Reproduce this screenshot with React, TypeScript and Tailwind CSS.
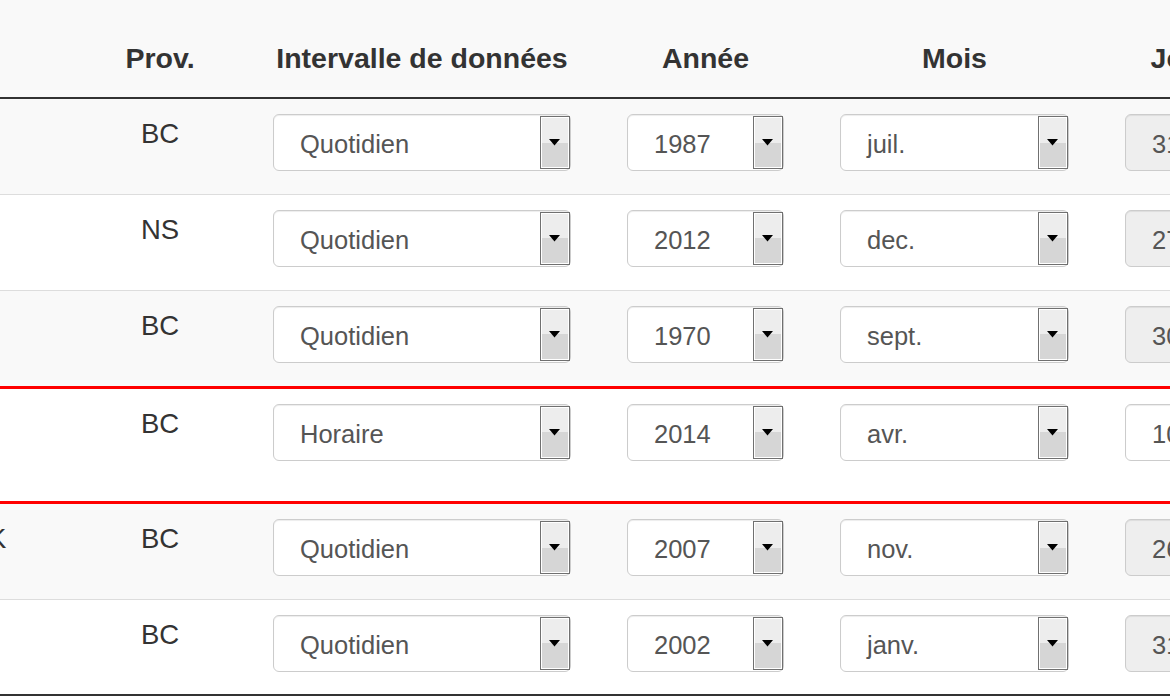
import React from "react";

type Row = {
  name: string;
  prov: string;
  interval: string;
  year: string;
  month: string;
  day: string;
  editable?: boolean;
};

const rows: Row[] = [
  { name: "VICTORIA", prov: "BC", interval: "Quotidien", year: "1987", month: "juil.", day: "31" },
  { name: "HALIFAX", prov: "NS", interval: "Quotidien", year: "2012", month: "dec.", day: "27" },
  { name: "KAMLOOPS", prov: "BC", interval: "Quotidien", year: "1970", month: "sept.", day: "30" },
  { name: "NELSON", prov: "BC", interval: "Horaire", year: "2014", month: "avr.", day: "10", editable: true },
  { name: "PENTICTON K", prov: "BC", interval: "Quotidien", year: "2007", month: "nov.", day: "26" },
  { name: "KELOWNA", prov: "BC", interval: "Quotidien", year: "2002", month: "janv.", day: "31" },
];

const cols = "grid grid-cols-[253px_170px_354px_213px_285px_169px]";

function DropButton() {
  return (
    <div className="h-[53px] w-[30px] shrink-0 border border-[#707070]">
      <div className="flex h-full w-full items-center justify-center border border-white bg-[linear-gradient(#ededed_50%,#d6d6d6_50%)]">
        <svg width="11" height="7" viewBox="0 0 11 7" className="-ml-[2px]">
          <polygon points="0,0 11,0 5.5,6.5" fill="#000" />
        </svg>
      </div>
    </div>
  );
}

function Select({ value }: { value: string }) {
  return (
    <div className="flex h-[57px] w-full items-center rounded-[6px] border border-[#ccc] bg-white pl-[26px] shadow-[inset_0_1px_1px_rgba(0,0,0,0.075)]">
      <span className="flex-1 pt-[2px] text-[25.5px] leading-[30px] text-[#555]">{value}</span>
      <DropButton />
    </div>
  );
}

function DayInput({ value, editable }: { value: string; editable?: boolean }) {
  return (
    <div
      className={
        "flex h-[57px] w-full items-center rounded-[6px] border border-[#ccc] pl-[26px] shadow-[inset_0_1px_1px_rgba(0,0,0,0.075)] " +
        (editable ? "bg-white" : "bg-[#eee]")
      }
    >
      <span className="pt-[2px] text-[25.5px] leading-[30px] text-[#555]">{value}</span>
    </div>
  );
}

export default function App() {
  return (
    <div className="h-[700px] w-[1170px] overflow-hidden bg-white font-['Liberation_Sans',Arial,sans-serif] text-[#333]">
      <div className="-ml-[178px] w-[1444px]">
        <div className={cols + " h-[99px] items-end border-b-2 border-[#333] bg-[#f9f9f9] pb-[19px] text-center text-[28.5px] font-bold leading-[39px]"}>
          <div />
          <div>Prov.</div>
          <div>Intervalle de données</div>
          <div>Année</div>
          <div>Mois</div>
          <div>Jour</div>
        </div>

        {rows.map((r, i) => {
          let rowCls = "h-[96px] border-b border-[#ddd]";
          if (i === 2) rowCls = "h-[95px]";
          if (i === 3) rowCls = "h-[118px] border-y-[3px] border-[#ff0000]";
          if (i === 5) rowCls = "h-[96px] border-b-2 border-[#333]";
          const bg = i % 2 === 0 ? "bg-[#f9f9f9]" : "bg-white";
          return (
            <div key={i} className={cols + " " + rowCls + " " + bg + " text-[27.5px] leading-[39px]"}>
              <div className="whitespace-nowrap pt-[15px]">{r.name}</div>
              <div className="px-[28px] pt-[15px] text-center">{r.prov}</div>
              <div className="px-[28px] pt-[15px]">
                <Select value={r.interval} />
              </div>
              <div className="px-[28px] pt-[15px]">
                <Select value={r.year} />
              </div>
              <div className="px-[28px] pt-[15px]">
                <Select value={r.month} />
              </div>
              <div className="px-[28px] pt-[15px]">
                <DayInput value={r.day} editable={r.editable} />
              </div>
            </div>
          );
        })}
      </div>
    </div>
  );
}
